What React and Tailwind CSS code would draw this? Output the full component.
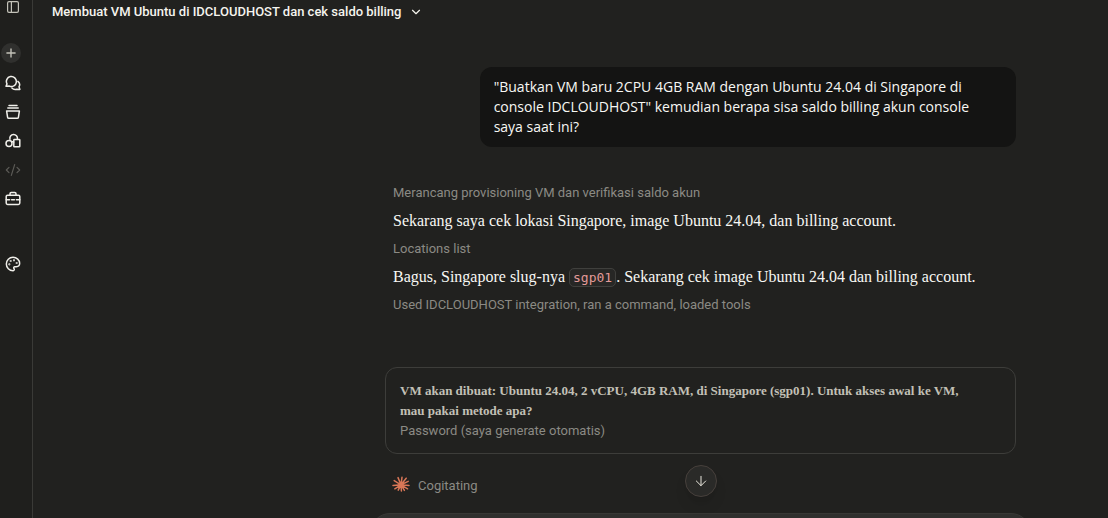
import { ArrowDown, ChevronDown, CodeXml, Palette, Plus } from "lucide-react"

function PanelIcon() {
    return (
        <svg viewBox="0 0 16 16" className="w-4 h-4" fill="none" stroke="currentColor" strokeWidth="1.2">
            <rect x="2.6" y="2.6" width="10.8" height="10.8" rx="1.4" />
            <path d="M6.4 2.6v10.8" />
        </svg>
    )
}

function ChatsIcon() {
    return (
        <svg viewBox="0 0 16 16" className="w-4 h-4" fill="none" stroke="currentColor" strokeWidth="1.5" strokeLinejoin="round" strokeLinecap="round">
            <path d="M1 11.3 2 8.9A5 5 0 1 1 4.4 11.1Z" />
            <path d="M12.9 6.4a4.2 4.2 0 0 1 1.1 5.4l.9 2.6-3.2-.1a4.6 4.6 0 0 1-4.8-1.2" />
        </svg>
    )
}

function ProjectsIcon() {
    return (
        <svg viewBox="0 0 16 16" className="w-4 h-4" fill="none" stroke="currentColor" strokeWidth="1.5" strokeLinejoin="round" strokeLinecap="round">
            <path d="M4 1.4h8" />
            <path d="M2.8 4.1h10.4" />
            <path d="M1.6 6.9h12.8l-1 6.4a1.2 1.2 0 0 1-1.2 1H3.8a1.2 1.2 0 0 1-1.2-1Z" />
        </svg>
    )
}

function ArtifactsIcon() {
    return (
        <svg viewBox="0 0 16 16" className="w-4 h-4" fill="none" stroke="currentColor" strokeWidth="1.5" strokeLinejoin="round" strokeLinecap="round">
            <circle cx="4" cy="10.6" r="3" />
            <rect x="8.8" y="6.4" width="6" height="7.4" rx="0.6" />
            <path d="M5 6.3a3.8 3.8 0 1 1 7.4-.4" />
            <path d="M6.6 8.6 8.6 9" />
        </svg>
    )
}

function ToolboxIcon() {
    return (
        <svg viewBox="0 0 16 16" className="w-4 h-4" fill="none" stroke="currentColor" strokeWidth="1.5" strokeLinejoin="round" strokeLinecap="round">
            <rect x="1.2" y="4.2" width="13.6" height="9.2" rx="1.4" />
            <path d="M5 4.2V2.8a1.2 1.2 0 0 1 1.2-1.2h3.6A1.2 1.2 0 0 1 11 2.8v1.4" />
            <path d="M1.2 8.8h3.4M6.6 8.8h2.8M11.4 8.8h3.4" />
        </svg>
    )
}

function Spark() {
    return (
        <svg viewBox="0 0 18 16" className="w-[18px] h-4 shrink-0 text-[#d97757]" fill="none" stroke="currentColor" strokeWidth="1.5" strokeLinecap="round">
            <path d="M9 8.8 6 1.6M9 8.8 10 1.2M9 8.8 14.2 2.2M9 8.8 16.2 5.4M9 8.8 17 9.4M9 8.8 15.6 12.8M9 8.8 12.4 14.4M9 8.8 9.4 15M9 8.8 6.2 14.2M9 8.8 2.8 12.8M9 8.8 1 9.4M9 8.8 2.2 4.6" />
            <circle cx="9" cy="8.8" r="2.4" fill="currentColor" stroke="none" />
        </svg>
    )
}

const navItems = [
    { label: "Chats", icon: ChatsIcon },
    { label: "Projects", icon: ProjectsIcon },
    { label: "Artifacts", icon: ArtifactsIcon },
    { label: "Code", icon: CodeXml, dim: true },
    { label: "Toolbox", icon: ToolboxIcon },
]

function Sidebar() {
    return (
        <nav className="flex w-[33px] shrink-0 flex-col items-start border-r border-[#3a3a37] bg-[#1f1f1d] pl-px text-[#f0efea]">
            <button aria-label="Toggle sidebar" className="flex h-3.5 w-[23px] items-center justify-center text-[#c3c2b9]">
                <PanelIcon />
            </button>
            <button aria-label="New chat" className="mt-[29px] flex h-5 w-5 items-center justify-center rounded-full bg-[#30302e] text-[#c3c2b9]">
                <Plus className="w-3.5 h-3.5" strokeWidth={2.4} />
            </button>
            <div className="mt-[5px] flex flex-col">
                {navItems.map(({ label, icon: Icon, dim }) => (
                    <a key={label} href="#" aria-label={label} className={`flex h-[29px] w-[23px] items-center justify-center ${dim ? "text-[#5c5b57]" : ""}`}>
                        <Icon className="w-4 h-4" strokeWidth={1.8} />
                    </a>
                ))}
            </div>
            <a href="#" aria-label="Design" className="mt-9 flex h-[29px] w-[23px] items-center justify-center">
                <Palette className="w-4 h-4" strokeWidth={2.2} />
            </a>
        </nav>
    )
}

function Step({ children }) {
    return <p className="text-[13px] leading-5 text-[#8b8a84]">{children}</p>
}

function Reply({ children }) {
    return <p className="font-['Liberation_Serif',serif] text-base leading-6 text-[#f8f8f4]">{children}</p>
}

export default function App() {
    return (
        <div className="flex h-screen overflow-hidden bg-[#21211f] font-['Roboto',sans-serif]">
            <Sidebar />
            <div className="flex min-w-0 flex-1 flex-col">
                <header className="flex h-[23px] shrink-0 items-center pl-[19px]">
                    <button className="flex items-center gap-2 text-[13px] font-medium leading-5 text-[#f5f4ee]">
                        Membuat VM Ubuntu di IDCLOUDHOST dan cek saldo billing
                        <ChevronDown className="w-3.5 h-3.5" strokeWidth={2} />
                    </button>
                </header>

                <main className="ml-auto mr-[77px] flex w-full max-w-[661px] flex-col">
                    <div className="relative flex flex-col px-[15px] pt-11">
                        <div className="w-[85%] self-end rounded-xl bg-[#141413] py-2.5 pr-8 pl-3.5 font-['Open_Sans',sans-serif] text-sm font-medium leading-5 text-[#f8f8f4]">
                            "Buatkan VM baru 2CPU 4GB RAM dengan Ubuntu 24.04 di Singapore di console IDCLOUDHOST" kemudian berapa sisa saldo billing akun console saya saat ini?
                        </div>

                        <div className="mt-9 flex flex-col gap-1.5 pl-2">
                            <Step>Merancang provisioning VM dan verifikasi saldo akun</Step>
                            <Reply>Sekarang saya cek lokasi Singapore, image Ubuntu 24.04, dan billing account.</Reply>
                            <Step>Locations list</Step>
                            <Reply>
                                Bagus, Singapore slug-nya{" "}
                                <code className="rounded-[5px] border border-[#40403d] bg-[#272725] px-[3px] py-px font-['DejaVu_Sans_Mono',monospace] text-[13px] leading-4 text-[#e39a98]">sgp01</code>
                                . Sekarang cek image Ubuntu 24.04 dan billing account.
                            </Reply>
                            <Step>Used IDCLOUDHOST integration, ran a command, loaded tools</Step>
                        </div>

                        <section className="mt-13 rounded-xl border border-[#3d3d3a] pt-[13px] pr-8 pb-3 pl-3.5">
                            <h2 className="font-['Liberation_Serif',serif] text-[13px] font-bold leading-5 text-[#c2c0b6]">
                                VM akan dibuat: Ubuntu 24.04, 2 vCPU, 4GB RAM, di Singapore (sgp01). Untuk akses awal ke VM, mau pakai metode apa?
                            </h2>
                            <Step>Password (saya generate otomatis)</Step>
                        </section>

                        <div className="mt-[22px] flex h-[37px] items-start gap-2 pl-[7px]">
                            <Spark />
                            <Step>Cogitating</Step>
                        </div>

                        <button aria-label="Scroll to bottom" className="absolute bottom-4 left-1/2 flex h-8 w-8 -translate-x-1/2 items-center justify-center rounded-full border border-[#47403c] bg-[#2a2a28] text-[#e8e6dc] shadow-lg">
                            <ArrowDown className="w-4 h-4" strokeWidth={1.5} />
                        </button>
                    </div>

                    <div className="h-28 shrink-0 rounded-[20px] border border-[#383835] bg-[#30302e]" />
                </main>
            </div>
        </div>
    )
}
